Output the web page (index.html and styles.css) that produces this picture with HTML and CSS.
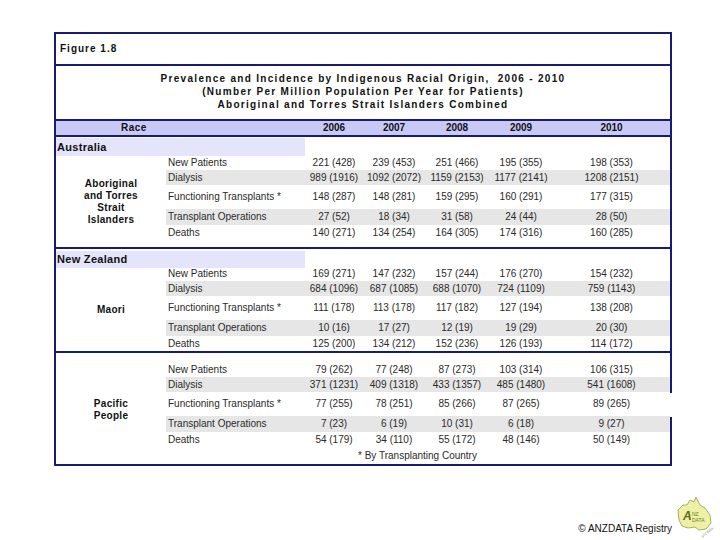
FILE: index.html
```html
<!DOCTYPE html>
<html>
<head>
<meta charset="utf-8">
<link rel="stylesheet" href="styles.css">
</head>
<body>
<div class="figure">
  <div class="fig-head">Figure 1.8</div>
  <div class="title">
    <div>Prevalence and Incidence by Indigenous Racial Origin,&nbsp; 2006 - 2010</div>
    <div>(Number Per Million Population Per Year for Patients)</div>
    <div>Aboriginal and Torres Strait Islanders Combined</div>
  </div>
  <div class="hdr">
    <span class="hdr-race">Race</span>
    <span>2006</span><span>2007</span><span>2008</span><span>2009</span><span>2010</span>
  </div>
  <div class="region"><span class="region-name">Australia</span></div>
  <div class="block au">
    <div class="race">Aboriginal<br>and Torres<br>Strait<br>Islanders</div>
    <div class="rows">
      <div class="row np"><span class="lbl">New Patients</span><span>221 (428)</span><span>239 (453)</span><span>251 (466)</span><span>195 (355)</span><span>198 (353)</span></div>
      <div class="row dia alt"><span class="lbl">Dialysis</span><span>989 (1916)</span><span>1092 (2072)</span><span>1159 (2153)</span><span>1177 (2141)</span><span>1208 (2151)</span></div>
      <div class="row ft"><span class="lbl">Functioning Transplants *</span><span>148 (287)</span><span>148 (281)</span><span>159 (295)</span><span>160 (291)</span><span>177 (315)</span></div>
      <div class="row to alt"><span class="lbl">Transplant Operations</span><span>27 (52)</span><span>18 (34)</span><span>31 (58)</span><span>24 (44)</span><span>28 (50)</span></div>
      <div class="row de"><span class="lbl">Deaths</span><span>140 (271)</span><span>134 (254)</span><span>164 (305)</span><span>174 (316)</span><span>160 (285)</span></div>
    </div>
  </div>
  <div class="region nz"><span class="region-name">New Zealand</span></div>
  <div class="block maori">
    <div class="race">Maori</div>
    <div class="rows">
      <div class="row np"><span class="lbl">New Patients</span><span>169 (271)</span><span>147 (232)</span><span>157 (244)</span><span>176 (270)</span><span>154 (232)</span></div>
      <div class="row dia alt"><span class="lbl">Dialysis</span><span>684 (1096)</span><span>687 (1085)</span><span>688 (1070)</span><span>724 (1109)</span><span>759 (1143)</span></div>
      <div class="row ft"><span class="lbl">Functioning Transplants *</span><span>111 (178)</span><span>113 (178)</span><span>117 (182)</span><span>127 (194)</span><span>138 (208)</span></div>
      <div class="row to alt"><span class="lbl">Transplant Operations</span><span>10 (16)</span><span>17 (27)</span><span>12 (19)</span><span>19 (29)</span><span>20 (30)</span></div>
      <div class="row de"><span class="lbl">Deaths</span><span>125 (200)</span><span>134 (212)</span><span>152 (236)</span><span>126 (193)</span><span>114 (172)</span></div>
    </div>
  </div>
  <div class="block pac">
    <div class="race">Pacific<br>People</div>
    <div class="rows">
      <div class="row np"><span class="lbl">New Patients</span><span>79 (262)</span><span>77 (248)</span><span>87 (273)</span><span>103 (314)</span><span>106 (315)</span></div>
      <div class="row dia alt"><span class="lbl">Dialysis</span><span>371 (1231)</span><span>409 (1318)</span><span>433 (1357)</span><span>485 (1480)</span><span>541 (1608)</span></div>
      <div class="row ft"><span class="lbl">Functioning Transplants *</span><span>77 (255)</span><span>78 (251)</span><span>85 (266)</span><span>87 (265)</span><span>89 (265)</span></div>
      <div class="row to alt"><span class="lbl">Transplant Operations</span><span>7 (23)</span><span>6 (19)</span><span>10 (31)</span><span>6 (18)</span><span>9 (27)</span></div>
      <div class="row de"><span class="lbl">Deaths</span><span>54 (179)</span><span>34 (110)</span><span>55 (172)</span><span>48 (146)</span><span>50 (149)</span></div>
    </div>
  </div>
  <div class="footnote">* By Transplanting Country</div>
  <div class="border-gap"></div>
</div>
<div class="credit">
  <span class="credit-text">© ANZDATA Registry</span>
  <svg class="logo" width="40" height="44" viewBox="0 0 40 44">
    <path d="M2 14 L7 9 L11 9 L14 4 L18 6 L20 1 L24 9 L29 12 L34 19 L35 27 L30 33 L23 34 L19 31 L12 32 L6 30 L3 24 Z" fill="#eef0a6" stroke="#a4b060" stroke-width="1"/>
    <text x="7" y="24" font-family="Liberation Sans" font-size="12" font-weight="bold" fill="#5a6b22" font-style="italic">A</text>
    <text x="16" y="20" font-family="Liberation Sans" font-size="5" fill="#6a7a30">NZ</text>
    <text x="16" y="26" font-family="Liberation Sans" font-size="5" fill="#6a7a30">DATA</text>
    <text x="24" y="39" font-family="Liberation Sans" font-size="4" fill="#a0a0a0" transform="rotate(-40 29 37)">anzdata</text>
  </svg>
</div>
</body>
</html>
```
FILE: styles.css
```css
html, body {
  margin: 0;
  padding: 0;
  background: #ffffff;
}
body {
  width: 720px;
  height: 540px;
  overflow: hidden;
  font-family: "Liberation Sans", Arial, sans-serif;
  color: #1a1a1a;
}
.figure {
  position: relative;
  margin: 32px 0 0 54px;
  width: 614px;
  border: 2px solid #1a1a72;
}
.fig-head {
  height: 30px;
  line-height: 30px;
  padding-left: 4px;
  font-size: 10px;
  font-weight: bold;
  letter-spacing: 1px;
  color: #111;
  border-bottom: 2px solid #1a1a72;
}
.title {
  height: 47px;
  padding-top: 6px;
  text-align: center;
  font-size: 10px;
  font-weight: bold;
  letter-spacing: 1.3px;
  line-height: 13px;
  color: #111;
  border-bottom: 2px solid #1a1a72;
}
.hdr {
  display: grid;
  grid-template-columns: 249px 58px 62px 64px 64px 117px;
  height: 14px;
  line-height: 14px;
  background: #c9c9f6;
  font-size: 10px;
  font-weight: bold;
  text-align: center;
  color: #111;
  border-bottom: 2px solid #1a1a72;
}
.hdr .hdr-race {
  text-align: left;
  padding-left: 65px;
  letter-spacing: 0.5px;
}
.region {
  height: 18px;
  line-height: 18px;
}
.region.nz {
  height: 17px;
  line-height: 17px;
}
.region-name {
  display: inline-block;
  width: 248px;
  padding-left: 1px;
  background: #e4e4fa;
  font-size: 11px;
  font-weight: bold;
  letter-spacing: 0.3px;
  color: #111;
}
.block {
  display: flex;
}
.block.au {
  padding-bottom: 7px;
  border-bottom: 2px solid #1a1a72;
}
.block.maori {
  border-bottom: 2px solid #1a1a72;
}
.block.pac {
  padding-top: 9px;
}
.race {
  width: 110px;
  display: flex;
  align-items: center;
  justify-content: center;
  text-align: center;
  font-size: 10px;
  font-weight: bold;
  letter-spacing: 0.3px;
  line-height: 12px;
  color: #111;
}
.au .race {
  padding-top: 9px;
  box-sizing: border-box;
}
.maori .race {
  padding-top: 3px;
  box-sizing: border-box;
}
.pac .race {
  padding-top: 11px;
  box-sizing: border-box;
}
.rows {
  display: flex;
  flex-direction: column;
}
.row {
  display: grid;
  grid-template-columns: 139px 58px 62px 64px 64px 117px;
  font-size: 10px;
  text-align: center;
  color: #2a2a2a;
  white-space: nowrap;
}
.row .lbl {
  text-align: left;
  padding-left: 2px;
}
.row.alt {
  background: #e6e6e6;
}
.row.np { height: 15px; line-height: 15px; }
.row.dia { height: 15px; line-height: 15px; }
.row.ft { height: 24px; line-height: 24px; }
.row.to { height: 16px; line-height: 16px; }
.row.de { height: 15px; line-height: 15px; }
.footnote {
  height: 17px;
  line-height: 17px;
  padding-left: 302px;
  font-size: 10px;
  color: #2a2a2a;
}
.border-gap {
  position: absolute;
  right: -2px;
  top: 359px;
  width: 2px;
  height: 24px;
  background: #ffffff;
}
.credit {
  display: flex;
  justify-content: flex-end;
  align-items: flex-end;
  gap: 4px;
  margin-top: 30px;
  height: 44px;
  padding-right: 4px;
}
.credit-text {
  font-size: 10px;
  line-height: 12px;
  margin-bottom: 5px;
  color: #111;
}
.logo {
  display: block;
}
```
